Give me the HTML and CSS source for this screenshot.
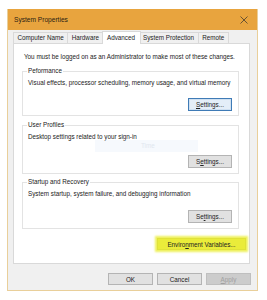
FILE: index.html
```html
<!DOCTYPE html>
<html>
<head>
<meta charset="utf-8">
<link rel="stylesheet" href="styles.css">
</head>
<body>
<div class="window">
  <div class="titlebar">
    <span class="title">System Properties</span>
    <svg class="close" width="8" height="8" viewBox="0 0 8 8"><path d="M0.5 0.5L7.5 7.5M7.5 0.5L0.5 7.5" stroke="#5a4a30" stroke-width="0.9" fill="none"/></svg>
  </div>
  <div class="tabs">
    <div class="tab">Computer Name</div>
    <div class="tab">Hardware</div>
    <div class="tab active">Advanced</div>
    <div class="tab">System Protection</div>
    <div class="tab">Remote</div>
  </div>
  <div class="panel">
    <p class="note">You must be logged on as an Administrator to make most of these changes.</p>
    <fieldset class="group perf">
      <legend>Peformance</legend>
      <p class="desc">Visual effects, processor scheduling, memory usage, and virtual memory</p>
      <div class="actions"><button class="btn focused"><u>S</u>ettings...</button></div>
    </fieldset>
    <fieldset class="group profiles">
      <legend>User Profiles</legend>
      <p class="desc">Desktop settings related to your sign-in</p>
      <div class="ghost">Time</div>
      <div class="actions"><button class="btn">S<u>e</u>ttings...</button></div>
    </fieldset>
    <fieldset class="group startup">
      <legend>Startup and Recovery</legend>
      <p class="desc">System startup, system failure, and debugging information</p>
      <div class="actions"><button class="btn">Se<u>t</u>tings...</button></div>
    </fieldset>
    <div class="env-row"><button class="btn env">Enviro<u>n</u>ment Variables...</button></div>
  </div>
  <div class="footer">
    <button class="btn dlg">OK</button>
    <button class="btn dlg">Cancel</button>
    <button class="btn dlg disabled"><u>A</u>pply</button>
  </div>
</div>
</body>
</html>
```
FILE: styles.css
```css
html, body {
  margin: 0;
  padding: 0;
  background: #ffffff;
}
body {
  font-family: "Liberation Sans", Arial, sans-serif;
  font-size: 6.3px;
  color: #222222;
}
.window {
  margin: 9px 0 0 7px;
  width: 251px;
  height: 282px;
  box-sizing: border-box;
  border: 1px solid #e9cf9a;
  border-top: none;
  background: #f0f0f0;
  display: flex;
  flex-direction: column;
}
.titlebar {
  height: 21px;
  background: #e8a43e;
  display: flex;
  align-items: center;
  justify-content: space-between;
  padding: 0 9px 0 6px;
  flex: none;
}
.title {
  font-size: 6.6px;
  color: #2b2212;
}
.close {
  display: block;
}
.tabs {
  display: flex;
  align-items: flex-end;
  height: 13px;
  margin: 0 0 0 5px;
  flex: none;
  position: relative;
  z-index: 1;
}
.tab {
  height: 10px;
  line-height: 10px;
  padding: 0 3.5px;
  border: 1px solid #d9d9d9;
  border-bottom: none;
  border-left: none;
  background: #f0f0f0;
  white-space: nowrap;
}
.tab:first-child {
  border-left: 1px solid #d9d9d9;
}
.tab.active {
  height: 12px;
  line-height: 11px;
  background: #ffffff;
  margin: 0 -1px 0 -2px;
  padding: 0 4.5px;
  border-left: 1px solid #d9d9d9;
  position: relative;
  top: 1px;
}
.panel {
  margin: 0 7px 0 5px;
  height: 221px;
  box-sizing: border-box;
  border: 1px solid #d9d9d9;
  background: #ffffff;
  padding: 8px 10px 0 8px;
  flex: none;
}
.note {
  margin: 0 0 4px 2px;
  line-height: 10px;
  white-space: nowrap;
}
.group {
  margin: 0;
  border: 1px solid #e3e3e3;
  padding: 0 6px 4px 5px;
  position: relative;
}
.group legend {
  padding: 0 1px;
  margin-left: -1px;
  line-height: 10px;
}
.desc {
  margin: 2px 0 0 0;
  line-height: 10px;
  white-space: nowrap;
}
.actions {
  display: flex;
  justify-content: flex-end;
}
.perf .actions { margin-top: 10px; }
.profiles { margin-top: 4px; padding-bottom: 5px; }
.profiles .actions { margin-top: 13px; }
.startup { margin-top: 3px; padding-bottom: 5px; }
.startup .actions { margin-top: 11px; }
.btn {
  font-family: inherit;
  font-size: 6.3px;
  color: #222222;
  height: 13px;
  width: 44px;
  padding: 0;
  box-sizing: border-box;
  background: #e1e1e1;
  border: 1px solid #b4b4b4;
  border-radius: 0;
  line-height: 11px;
}
.btn.focused {
  border: 1px solid #3f7bb6;
  background: #e4eef8;
  box-shadow: inset 0 0 0 1px #cfe0f1;
}
.ghost {
  position: absolute;
  left: 72px;
  top: 10px;
  width: 103px;
  height: 12px;
  background: rgba(225, 235, 247, 0.3);
  color: #e1e7ef;
  line-height: 12px;
  padding-left: 46px;
  box-sizing: border-box;
}
.env-row {
  display: flex;
  justify-content: flex-end;
  margin: 9px -7px 0 0;
}
.btn.env {
  width: 89px;
  height: 12px;
  background: #eaec3a;
  border: 1px solid #e0e23a;
  box-shadow: 0 0 2px 2px #eef15a;
}
.footer {
  flex: 1;
  display: flex;
  justify-content: flex-end;
  align-items: flex-start;
  gap: 4px;
  padding: 9px 6px 0 0;
}
.btn.dlg {
  width: 45px;
  height: 12px;
  background: #e1e1e1;
}
.btn.disabled {
  background: #cccccc;
  border-color: #bfbfbf;
  color: #a0a0a0;
}
```
